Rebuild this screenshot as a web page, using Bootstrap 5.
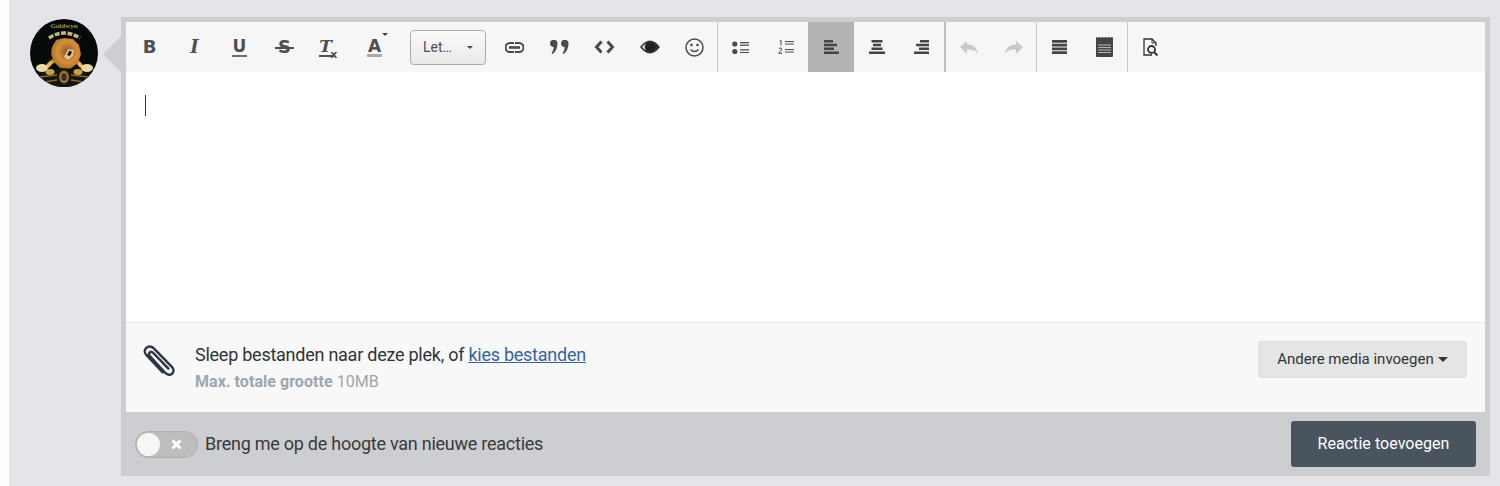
<!DOCTYPE html>
<html lang="nl">
<head>
<meta charset="utf-8">
<title>Reactie</title>
<link rel="stylesheet" href="https://cdn.jsdelivr.net/npm/bootstrap@5.3.0/dist/css/bootstrap.min.css">
<style>
html,body{height:486px;overflow:hidden}
body{background:#fdfdfd;font-family:Roboto,"Liberation Sans",sans-serif;color:#2f3439;padding-left:9px}
.stage{background:#e4e5e9;height:486px;padding:17px 10px 10px 21px;gap:23px}
.avatar-pic{width:68px;height:68px;margin-top:2px;flex:none}
.panel-wrap{min-width:0;height:459px}
.pointer{position:absolute;left:-18px;top:19px;width:0;height:0;border-style:solid;border-width:18px 18px 18px 0;border-color:transparent #cdced2 transparent transparent}
.panel{background:#cdced2;padding:5px 5px 0;height:459px}
.tools{height:50px;background:#f6f6f6;padding-left:1px}
.tbtn{width:45px;height:50px;color:#4a4a4a;flex:none}
.tbtn svg{display:block}
.tbtn.on{background:#b3b3b3;width:46px}
.tbtn.off{color:#c9c9c9}
.sep{width:1px;height:50px;background:#c6c6c6;flex:none}
.sep.wide{width:2px;background:#bdbdbd}
.glyph{font-family:"DejaVu Sans",sans-serif;font-weight:700;font-size:18px;line-height:1;color:#4f4f4f;display:inline-block;position:relative}
.g-i{font-family:"DejaVu Serif",serif;font-style:italic;font-size:18px}
.g-u{border-bottom:2px solid #6e6e6e;padding:0 1px 0;line-height:17px;font-size:17px}
.g-s{font-size:18px}
.g-s::after{content:"";position:absolute;left:-3px;right:-3px;top:9px;height:2px;background:#4f4f4f}
.g-t{font-family:"DejaVu Serif",serif;font-style:italic;font-size:17px;line-height:17px;border-bottom:2px solid #4f4f4f;padding:0 2px 0 0;margin-right:6px}
.g-t sub{position:absolute;left:11px;bottom:-5px;font-family:"DejaVu Sans",sans-serif;font-size:11px;font-style:normal;line-height:1}
.g-a{border-bottom:3px solid #aaa;padding:0 1px;line-height:16px;font-size:17px}
.g-a::after{content:"";position:absolute;right:-6px;top:-5px;border-style:solid;border-width:3px 3px 0;border-color:#444 transparent transparent}
.fontsel{width:76px;height:35px;margin:0 6px 0 13px;border:1px solid #aaa;border-radius:4px;background:linear-gradient(#fbfbfb,#e9e9e9);font-size:14px;color:#4f4f4f;padding:0 12px;flex:none}
.fontsel::after{content:"";border-style:solid;border-width:3px 3px 0;border-color:#444 transparent transparent}
.editor{height:251px;background:#fff;border-bottom:1px solid #e9e9e9;padding:23px 19px}
.caret{width:1px;height:21px;background:#333}
.upload{height:89px;background:#f8f8f8;padding:0 18px 0 17px}
.clip{width:32px;height:34px;margin-right:20px;margin-top:-14px;flex:none}
.up-main{font-size:18px;line-height:24px;color:#2f3439;letter-spacing:-.25px}
.up-main a{color:#33659f}
.up-sub{font-size:16px;line-height:20px;color:#9ca6b0;margin-top:5px;letter-spacing:.05px}
.media-btn{background:#e5e5e5;border:1px solid #dedede;border-radius:3px;height:37px;width:209px;font-size:15px;color:#2f3439;padding:0;margin-bottom:17px}
.media-btn::after{content:"";display:inline-block;margin-left:4px;vertical-align:2px;border-style:solid;border-width:5px 5px 0;border-color:#2f3439 transparent transparent}
.foot{height:64px;padding:0 9px}
.toggler{width:63px;height:27px;border-radius:14px;background:#bdbdbd;border:1px solid #aeaeae;padding:1px;margin-right:7px}
.knob{width:23px;height:23px;border-radius:50%;background:#f6f6f6}
.xmark{margin-right:14px}
.foot-label{font-size:18px;color:#3a3a3a;letter-spacing:-.25px;padding-bottom:2px}
.send-btn{background:#49545f;color:#fff;border:0;border-radius:3px;width:185px;height:46px;font-size:16px;padding:0;letter-spacing:.05px}
</style>
</head>
<body>
<div class="stage d-flex">
  <svg class="avatar-pic" viewBox="0 0 68 68" role="img" aria-label="Avatar">
    <defs>
      <clipPath id="cp"><circle cx="34" cy="34" r="34"/></clipPath>
      <radialGradient id="lion" cx=".55" cy=".45" r=".6"><stop offset="0" stop-color="#8a5220"/><stop offset=".55" stop-color="#d88f3a"/><stop offset="1" stop-color="#a56a25"/></radialGradient>
      <linearGradient id="ringg" x1="0" y1="0" x2="0" y2="1"><stop offset="0" stop-color="#4d4418"/><stop offset=".55" stop-color="#e8b92f"/><stop offset="1" stop-color="#f0c23a"/></linearGradient>
    </defs>
    <g clip-path="url(#cp)">
      <rect width="68" height="68" fill="#050a09"/>
      <path d="M17 48A21 21 0 0 1 52 48" fill="none" stroke="url(#ringg)" stroke-width="4"/>
      <path d="M19 19 Q34 9 50 19" fill="none" stroke="#c4b67c" stroke-width="3.500" stroke-dasharray="5 1.500"/>
      <path d="M22 28 26 21 34 19 43 20 49 26 51 35 48 44 40 50 30 49 24 43 21 35Z" fill="url(#lion)"/>
      <path d="M34 38 38 30 44 31 43 37 38 41Z" fill="#d9c49a"/>
      <path d="M37 36 39.500 31.500 42 33 40 37Z" fill="#1b120a"/>
      <path d="M0 54Q34 45 68 54V68H0Z" fill="#17140b"/>
      <ellipse cx="12" cy="49" rx="6" ry="4" fill="#ead9a0"/><ellipse cx="57" cy="49" rx="6" ry="4" fill="#ead9a0"/>
      <ellipse cx="20" cy="53" rx="4.500" ry="3" fill="#c9a244"/><ellipse cx="48" cy="53" rx="4.500" ry="3" fill="#c9a244"/>
      <ellipse cx="34" cy="58" rx="5" ry="6.500" fill="#8f6f2c"/><ellipse cx="34" cy="58" rx="2.500" ry="3.500" fill="#3a2a12"/>
      <path d="M10 58 27 56M41 56 58 58M14 63 27 61M41 61 54 63" stroke="#7f6e35" stroke-width="1.500"/>
    </g>
    <text x="34" y="9" text-anchor="middle" font-family="Liberation Serif,serif" font-size="7" font-weight="700" fill="#a8925a">Goldwyn</text>
  </svg>
  <div class="panel-wrap flex-grow-1 position-relative">
    <div class="pointer"></div>
    <div class="panel d-flex flex-column">
      <div class="tools d-flex align-items-center">
        <div class="tbtn d-flex align-items-center justify-content-center"><span class="glyph">B</span></div>
        <div class="tbtn d-flex align-items-center justify-content-center"><span class="glyph g-i">I</span></div>
        <div class="tbtn d-flex align-items-center justify-content-center"><span class="glyph g-u">U</span></div>
        <div class="tbtn d-flex align-items-center justify-content-center"><span class="glyph g-s">S</span></div>
        <div class="tbtn d-flex align-items-center justify-content-center"><span class="glyph g-t">T<sub>x</sub></span></div>
        <div class="tbtn d-flex align-items-center justify-content-center"><span class="glyph g-a">A</span></div>
        <div class="fontsel d-flex align-items-center justify-content-between"><span>Let…</span></div>
        <div class="tbtn d-flex align-items-center justify-content-center"><svg width="19" height="11" viewBox="0 0 19 11" fill="none" stroke="currentColor" stroke-width="2"><path d="M9 1H5a4.500 4.500 0 0 0 0 9h4M10 1h4a4.500 4.500 0 0 1 0 9h-4"/><path d="M4 5.500h11" stroke-width="2.600"/></svg></div>
        <div class="tbtn d-flex align-items-center justify-content-center"><svg width="19" height="14" viewBox="0 0 19 14" fill="currentColor"><path d="M0 3.500a3.500 3.500 0 1 1 7.500 0C7.500 8 5.500 12 2.500 14L1.500 13C3 11.500 3.500 9.500 3.700 7A3.500 3.500 0 0 1 0 3.500ZM11 3.500a3.500 3.500 0 1 1 7.500 0c0 4.500-2 8.500-5 10.500l-1-1c1.500-1.500 2-3.500 2.200-6A3.500 3.500 0 0 1 11 3.500Z"/></svg></div>
        <div class="tbtn d-flex align-items-center justify-content-center"><svg width="21" height="14" viewBox="0 0 21 14" fill="none" stroke="currentColor" stroke-width="3"><path d="M7.500 1.500 2.500 7l5 5.500M13.500 1.500l5 5.500-5 5.500"/></svg></div>
        <div class="tbtn d-flex align-items-center justify-content-center"><svg width="20" height="14" viewBox="0 0 20 14"><path d="M0 7Q5 .5 10 .5T20 7Q15 13.500 10 13.500T0 7Z" fill="#333"/><path d="M2.200 7Q3.500 4.800 6.200 3.300A5.500 5.500 0 0 0 6 10.500Q3.800 9.200 2.200 7Z" fill="#f6f6f6"/><circle cx="10.500" cy="7" r="4.800" fill="#222"/></svg></div>
        <div class="tbtn d-flex align-items-center justify-content-center"><svg width="19" height="19" viewBox="0 0 19 19" fill="none" stroke="currentColor" stroke-width="1.500"><circle cx="9.500" cy="9.500" r="8.500"/><path d="M5.500 11.500Q9.500 15.500 13.500 11.500"/><circle cx="6.500" cy="7" r="1.300" fill="currentColor" stroke="none"/><circle cx="12.500" cy="7" r="1.300" fill="currentColor" stroke="none"/></svg></div>
        <div class="sep"></div>
        <div class="tbtn d-flex align-items-center justify-content-center"><svg width="17" height="13" viewBox="0 0 17 13" fill="currentColor"><circle cx="2.800" cy="3" r="2.600"/><circle cx="2.800" cy="10.500" r="2.600"/><path d="M8 1h9v1.200H8zM8 3.600h9v1.200H8zM8 8.300h9v1.200H8zM8 10.900h9v1.200H8z"/></svg></div>
        <div class="tbtn d-flex align-items-center justify-content-center"><svg width="16" height="14" viewBox="0 0 16 14" fill="none" stroke="currentColor" stroke-width="1"><path d="M1.500 1.200 3 .5V5.500M7 1.500h9M7 4h9M7 9.500h9M7 12h9M.8 8.500Q2 7.500 3.500 8.300 4.200 10 .7 13.300H4.200"/></svg></div>
        <div class="tbtn on d-flex align-items-center justify-content-center"><svg width="15" height="14" viewBox="0 0 15 14" fill="#444"><path d="M0 0h9v2.500H0zM0 3.800h13v2.500H0zM0 7.600h10v2.500H0zM0 11.500h15V14H0z"/></svg></div>
        <div class="tbtn d-flex align-items-center justify-content-center"><svg width="16" height="14" viewBox="0 0 16 14" fill="#444"><path d="M2.500 0h11v2.500h-11zM4 3.800h8v2.500H4zM2.500 7.600h11v2.500h-11zM0 11.500h16V14H0z"/></svg></div>
        <div class="tbtn d-flex align-items-center justify-content-center"><svg width="15" height="14" viewBox="0 0 15 14" fill="#444"><path d="M6 0h9v2.500H6zM2 3.800h13v2.500H2zM5 7.600h10v2.500H5zM0 11.500h15V14H0z"/></svg></div>
        <div class="sep wide"></div>
        <div class="tbtn off d-flex align-items-center justify-content-center"><svg width="18" height="13" viewBox="0 0 18 13" fill="currentColor"><path d="M7 0v3.500c6 0 10 3 11 9.500-2-3.500-5-4.500-11-4.500v4.500L0 6Z"/></svg></div>
        <div class="tbtn off d-flex align-items-center justify-content-center"><svg width="18" height="13" viewBox="0 0 18 13" fill="currentColor"><path d="M11 0v3.500C5 3.500 1 6.500 0 13c2-3.500 5-4.500 11-4.500V13l7-7Z"/></svg></div>
        <div class="sep"></div>
        <div class="tbtn d-flex align-items-center justify-content-center"><svg width="15" height="14" viewBox="0 0 15 14" fill="#444"><path d="M0 0h15v2.800H0zM0 3.700h15v2.800H0zM0 7.500h15v2.800H0zM0 11.200h15V14H0z"/></svg></div>
        <div class="tbtn d-flex align-items-center justify-content-center"><svg width="17" height="20" viewBox="0 0 17 20"><rect width="17" height="20" rx="1" fill="#444"/><path d="M2 1V0M5 1V0M8 1V0M11 1V0M14 1V0" stroke="#f6f6f6"/><path d="M2 8h13M2 10.500h13M2 13h13M2 15.500h13" stroke="#b5b5b5" stroke-width="1.200"/></svg></div>
        <div class="sep"></div>
        <div class="tbtn d-flex align-items-center justify-content-center"><svg width="16" height="18" viewBox="0 0 16 18" fill="none" stroke="#333" stroke-width="1.300"><path d="M9 17H1V1h8l4 4v3"/><path d="M9 1v4h4" stroke-width="1"/><circle cx="8.500" cy="11.500" r="3.500" stroke-width="1.800"/><path d="m11 14 3.500 3.500" stroke-width="2"/></svg></div>
      </div>
      <div class="editor"><div class="caret"></div></div>
      <div class="upload d-flex align-items-center">
        <svg class="clip" viewBox="0 0 34 36" fill="none" stroke="#2b3642" stroke-width="2.600" stroke-linecap="round" aria-hidden="true"><path d="M27 26 11 9.500c-1.500-1.500-3-1.500-4-.5s-1 2.500.5 4L24 31c2 2 5 2.300 7 .3s1.700-5-.3-7L11.500 4.500C9 2 5.500 2 3.500 4S1 9 3.500 11.500L21 30"/></svg>
        <div class="flex-grow-1">
          <div class="up-main">Sleep bestanden naar deze plek, of <a href="#">kies bestanden</a></div>
          <div class="up-sub"><strong>Max. totale grootte</strong> 10MB</div>
        </div>
        <button type="button" class="btn media-btn">Andere media invoegen</button>
      </div>
      <div class="foot d-flex align-items-center">
        <div class="toggler d-flex align-items-center justify-content-between">
          <div class="knob"></div>
          <svg class="xmark" width="11" height="11" viewBox="0 0 11 11" stroke="#fff" stroke-width="3"><path d="m1.500 1.500 8 8M9.500 1.500l-8 8"/></svg>
        </div>
        <span class="foot-label flex-grow-1">Breng me op de hoogte van nieuwe reacties</span>
        <button type="button" class="btn send-btn">Reactie toevoegen</button>
      </div>
    </div>
  </div>
</div>
<script src="https://cdn.jsdelivr.net/npm/bootstrap@5.3.0/dist/js/bootstrap.bundle.min.js"></script>
</body>
</html>
